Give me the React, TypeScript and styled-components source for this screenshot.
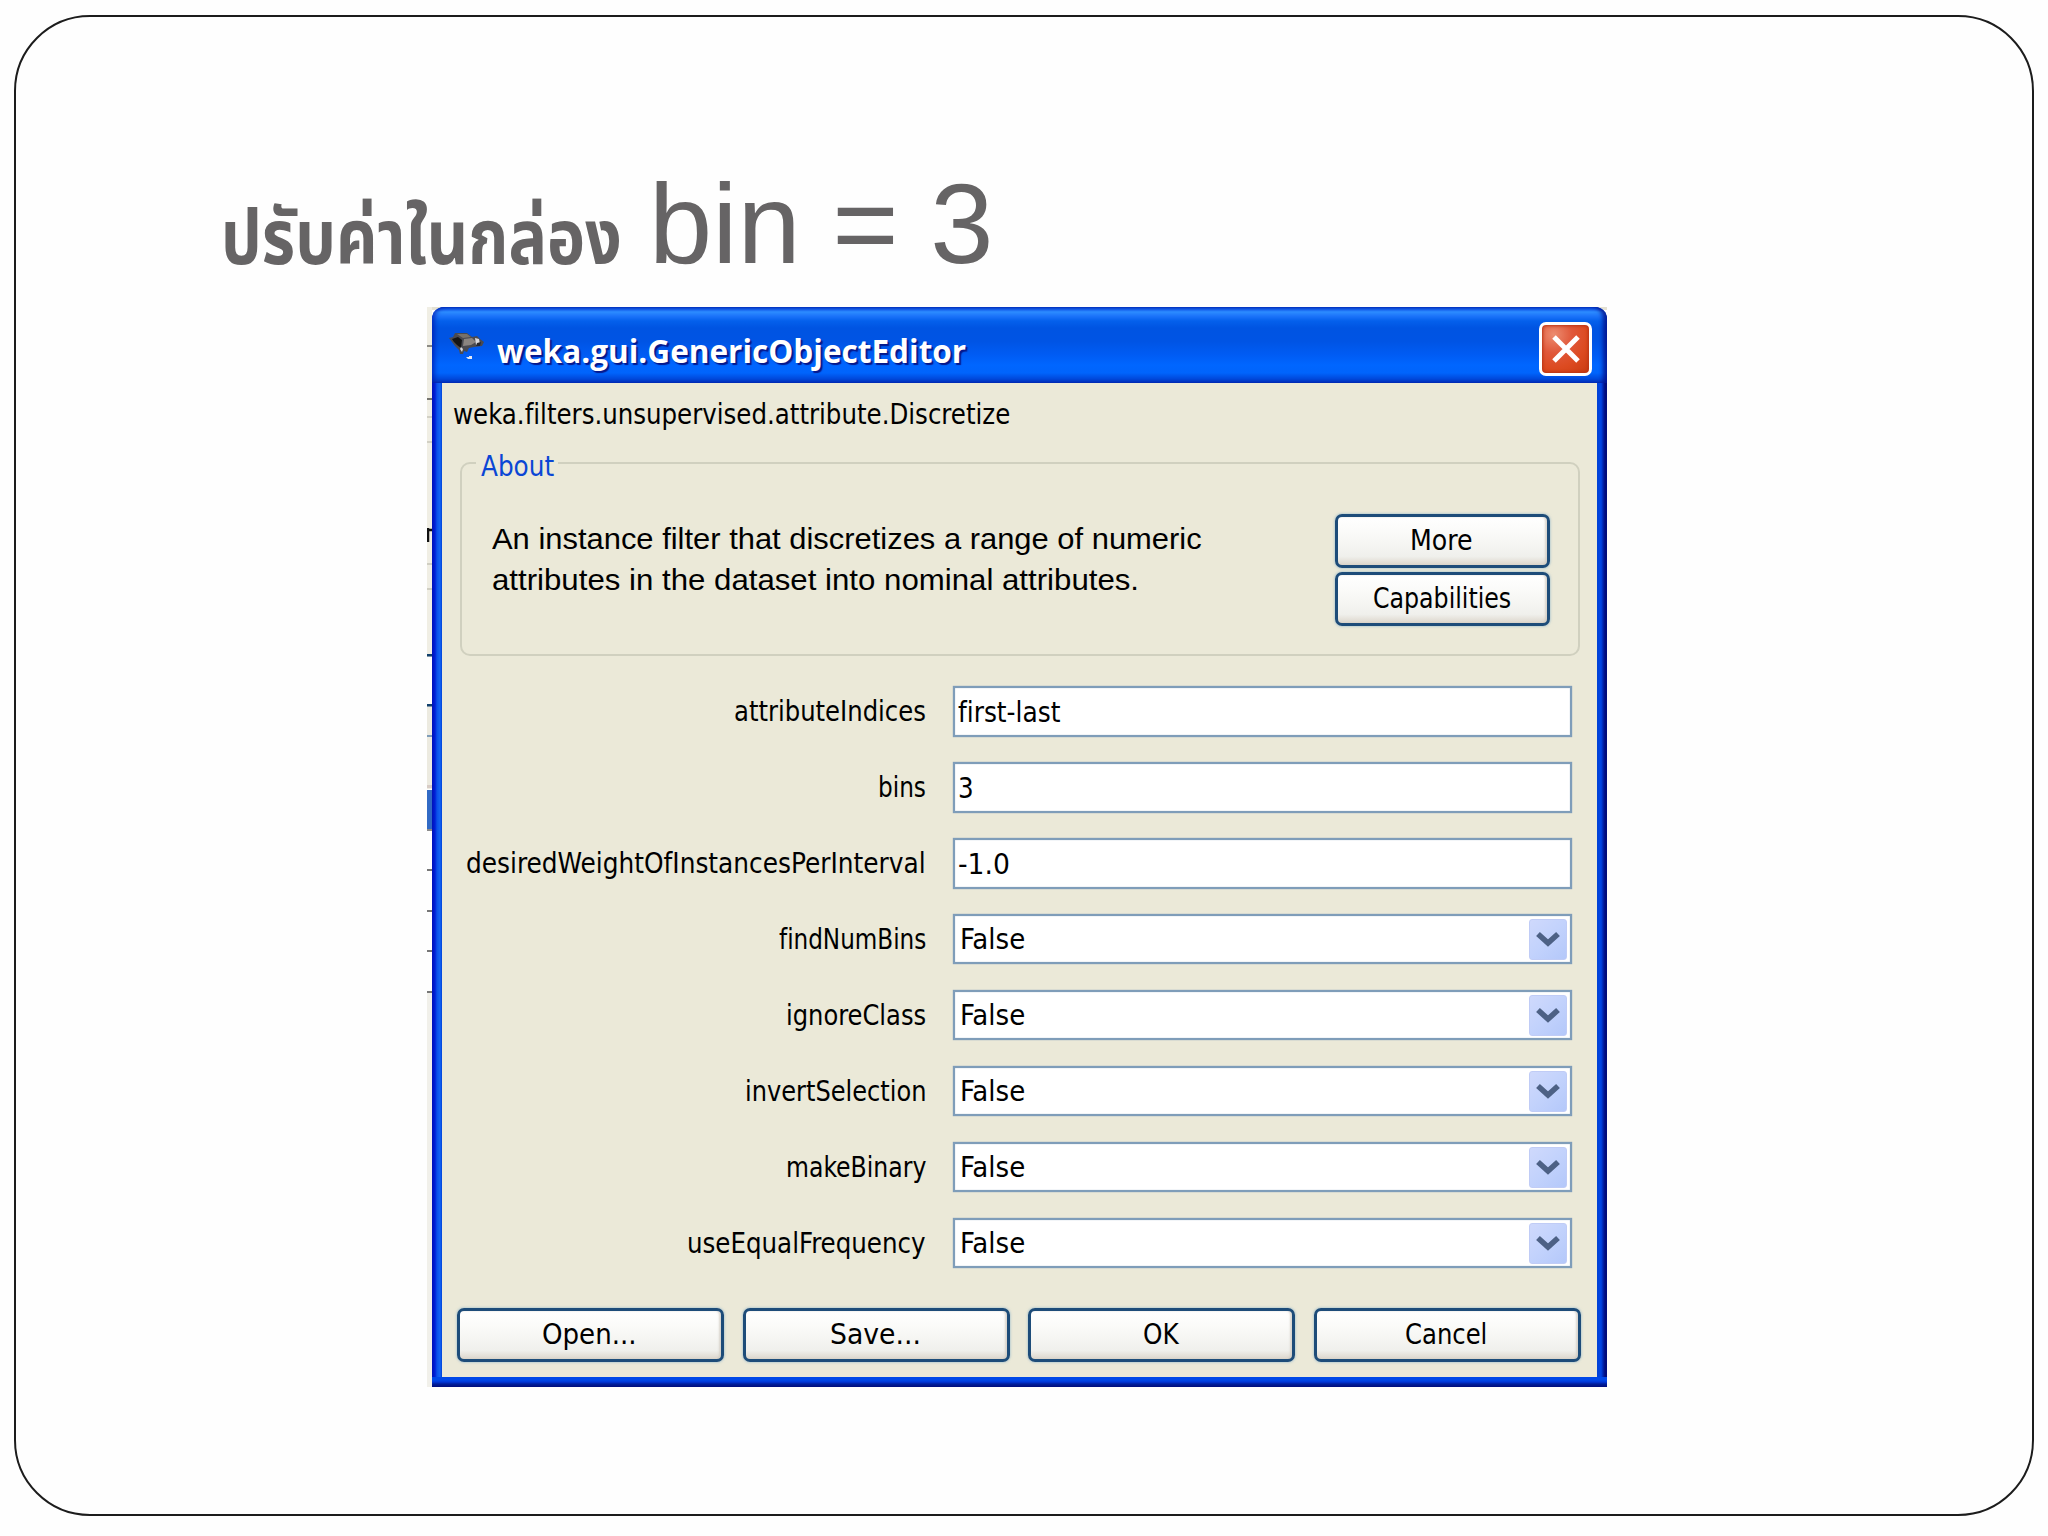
import React, { useLayoutEffect, useRef, useState } from "react";
import styled, { createGlobalStyle } from "styled-components";

const Global = createGlobalStyle`
  * { box-sizing: border-box; }
  html, body { margin: 0; padding: 0; background: #fefefe; overflow: hidden; }
`;

const ui = `"DejaVu Sans Condensed", "DejaVu Sans", Verdana, sans-serif`;

const Slide = styled.main`
  width: 2048px;
  height: 1536px;
  padding: 15px 14px 20px;
  background: #fefefe;
`;

const Frame = styled.section`
  width: 2020px;
  height: 1501px;
  border: 2px solid #1c1c1c;
  border-radius: 76px;
  display: flex;
  flex-direction: column;
`;

const Heading = styled.h1`
  margin: 142px 0 0 205px;
  height: 148px;
  display: flex;
  align-items: flex-start;
  color: #666465;
  font-weight: 400;
  line-height: 130px;
`;

const Thai = styled.span`
  width: 428px;
  padding-top: 17px;
  font-family: "Noto Sans Thai", Loma, Waree, Garuda, "Liberation Sans", sans-serif;
  font-weight: 700;
  font-size: 76px;
`;

const Latin = styled.span`
  font-family: "Liberation Sans", Arial, sans-serif;
  font-size: 113px;
`;

const Capture = styled.div`
  display: flex;
  margin-left: 411px;
  width: 1180px;
  height: 1080px;
  background: linear-gradient(#e4e1d3 0 3px, transparent 3px 100%);
`;

const StripSvg = styled.svg`
  flex: none;
  width: 5px;
  height: 1080px;
`;

const Window = styled.div`
  width: 1175px;
  height: 1080px;
  display: flex;
  flex-direction: column;
  border-radius: 12px 12px 0 0;
  padding: 0 10px 10px;
  background:
    linear-gradient(to bottom, #0048e8 0 3px, #0036d8 5px, #001e9c 7px, #000c7c 10px) bottom / 100% 10px no-repeat,
    linear-gradient(to right, #0012b8 0, #0020d8 3px, #0a50e8 5px, #1264f4 8px, #0042d8 10px) left / 10px 100% no-repeat,
    linear-gradient(to right, #0040d4 0, #0046e6 4px, #0026b0 6px, #000c80 8px, #000c7a 10px) right / 10px 100% no-repeat,
    #0050e8;
`;

const TitleBar = styled.header`
  height: 76px;
  margin: 0 -10px;
  padding: 15px 15px 0 17px;
  display: flex;
  align-items: flex-start;
  border-radius: 12px 12px 0 0;
  background: linear-gradient(
    #0348d8 0, #1c6cf4 3px, #2c8cff 5px, #1c74fa 9px, #0460ec 14px, #0054e2 21px,
    #0054e4 34px, #005cf4 48px, #0066ff 58px, #0064fc 66px, #004ce0 71px, #0038c4 76px
  );
  box-shadow: inset 4px 0 4px -1px rgba(0, 20, 170, 0.65), inset -5px 0 4px -1px rgba(0, 10, 130, 0.8);
`;

const BirdSvg = styled.svg`
  width: 36px;
  height: 30px;
  margin-top: 10px;
`;

const Title = styled.div`
  flex: 1;
  margin-left: 12px;
  font: 700 33px/44px "Open Sans", "Noto Sans", sans-serif;
  color: #fff;
  text-shadow: 2px 2px 1px #06188c;
  padding-top: 7px;
`;

const CloseButton = styled.button`
  width: 53px;
  height: 54px;
  padding: 0;
  border: 3px solid #fff;
  border-radius: 7px;
  display: grid;
  place-items: center;
  background: radial-gradient(circle at 25% 20%, #ec8c70 0, #e0583a 35%, #dc4a20 65%, #c83a10 100%);
  box-shadow: inset 0 0 3px 1px #b83414;
`;

const Client = styled.div`
  flex: 1;
  background: #ebe9d8;
  padding: 0 14px 0 15px;
  display: flex;
  flex-direction: column;
  color: #000;
  font: 400 29px/40px ${ui};
`;

const ClassName = styled.div`
  margin: 11px 0 0 -4px;
  height: 40px;
`;

const About = styled.fieldset`
  margin: 9px 3px 0 3px;
  padding: 0 28px 0 30px;
  height: 213px;
  min-width: 0;
  border: 2px solid #d0d0bf;
  border-radius: 10px;
  display: flex;
  justify-content: space-between;
`;

const Legend = styled.legend`
  height: 40px;
  margin-left: -16px;
  padding: 3px 4px 0 5px;
  color: #0a46d5;
`;

const Description = styled.p`
  margin: 36px 0 0 0;
  font: 400 30px/40.6px "Liberation Sans", Arial, sans-serif;
`;

const ButtonStack = styled.div`
  display: flex;
  flex-direction: column;
  gap: 4px;
  margin-top: 31px;
`;

const XpButton = styled.button<{ $w: number }>`
  width: ${(p) => p.$w}px;
  height: 54px;
  padding: 0 2px 3px 0;
  border: 3px solid #1d4c79;
  border-radius: 7px;
  display: flex;
  align-items: center;
  justify-content: center;
  background: linear-gradient(#fff 0, #fafaf8 35%, #f0f0ec 82%, #dcd6cc 100%);
  box-shadow: 0 0 2px 1px rgba(160, 190, 205, 0.6), inset -2px 0 2px rgba(205, 200, 190, 0.7);
  color: #000;
  font: 400 29px/40px ${ui};
`;

const Form = styled.div`
  margin-top: 30px;
  display: grid;
  grid-template-columns: 469px 619px;
  column-gap: 27px;
  row-gap: 25px;
`;

const Label = styled.label`
  height: 51px;
  line-height: 51px;
  text-align: right;
`;

const Field = styled.div<{ $combo?: boolean }>`
  height: ${(p) => (p.$combo ? 50 : 51)}px;
  border: 2px solid #7f9db9;
  box-shadow: 0 0 1px #7f9db9, inset 0 0 1px #7f9db9;
  background: #fff;
  display: flex;
  align-items: center;
  justify-content: space-between;
  padding: 0 3px 0 ${(p) => (p.$combo ? 5 : 3)}px;
`;

const DropButton = styled.span`
  width: 38px;
  height: 41px;
  margin-top: 0;
  border-radius: 3px;
  border: 1px solid #c0ccf6;
  display: grid;
  place-items: center;
  background: linear-gradient(135deg, #cfd9fc 0%, #c2d2fc 50%, #b4c8fa 100%);
`;

const Footer = styled.footer`
  margin-top: 39px;
  display: flex;
  gap: 18.6px;
`;

const FitBox = styled.span`
  display: inline-block;
  white-space: nowrap;
  text-align: left;
  font-variant-ligatures: none;
`;

const FitInner = styled.span`
  display: inline-block;
  transform-origin: 0 50%;
`;

/* Stretches a run of text horizontally so that it fills a given width. */
function Fit({ w, children }: { w: number; children: React.ReactNode }) {
  const ref = useRef<HTMLSpanElement>(null);
  const [scale, setScale] = useState(1);
  useLayoutEffect(() => {
    if (ref.current) setScale(w / ref.current.offsetWidth);
  }, [w]);
  return (
    <FitBox style={{ width: w }}>
      <FitInner ref={ref} style={{ transform: `scaleX(${scale})` }}>
        {children}
      </FitInner>
    </FitBox>
  );
}

const marks: [number, number, string][] = [
  [38, 2, "#8c8a84"], [91, 2, "#77756f"], [109, 2, "#d2d0c4"], [134, 2, "#d2d0c4"],
  [256, 2, "#d0cec2"], [281, 2, "#d0cec2"], [347, 2.5, "#12406c"], [397, 2.5, "#12406c"],
  [428, 2, "#7f9db9"], [478, 3, "#d8ccc6"], [483, 39, "#316ac5"], [522, 2, "#8b8b8b"],
  [562, 2, "#777"], [603, 2, "#777"], [643, 2, "#777"], [684, 2, "#777"],
];

function Strip() {
  return (
    <StripSvg viewBox="0 0 5 1080">
      <rect width="5" height="350" fill="#f0eee4" />
      <rect y="398" width="5" height="84" fill="#eceae0" />
      <rect y="686" width="5" height="394" fill="#f1f0ea" />
      {marks.map(([y, h, c]) => (
        <rect key={y} y={y} width="5" height={h} fill={c} />
      ))}
      <path d="M1 221v14M1 223h4" stroke="#111" strokeWidth="2.5" fill="none" />
    </StripSvg>
  );
}

function Bird() {
  return (
    <BirdSvg viewBox="0 0 36 30">
      <path d="M0 6l4-1 2-4h12l5 4 5-1 3 3 4 3-2 4-8 1-5 1-2 4-3-1-1 3h-3l-1-4-4-4-3-4z" fill="#4a4a50" />
      <path d="M3 7l6-2 4 3-1 8-4-3-3-3z" fill="#141414" />
      <path d="M8 2h10l4 3-8 1z" fill="#77716a" />
      <path d="M15 7l8-1 4 4-5 3-8 1z" fill="#8a8480" />
      <path d="M26 6l4 1 1 5-4 1zM12 15l2 2-1 3-2-3z" fill="#d8d8dc" />
      <path d="M28 11l4-1-1 4-4 0z" fill="#2a2a30" />
      <path d="M17 25h3v-1h3v3h-4z" fill="#e4e8f4" />
    </BirdSvg>
  );
}

const fields: { label: string; lw: number; value: string; vw: number; combo?: boolean }[] = [
  { label: "attributeIndices", lw: 192, value: "first-last", vw: 102 },
  { label: "bins", lw: 48, value: "3", vw: 16 },
  { label: "desiredWeightOfInstancesPerInterval", lw: 460, value: "-1.0", vw: 52 },
  { label: "findNumBins", lw: 147, value: "False", vw: 65, combo: true },
  { label: "ignoreClass", lw: 140, value: "False", vw: 65, combo: true },
  { label: "invertSelection", lw: 181, value: "False", vw: 65, combo: true },
  { label: "makeBinary", lw: 140, value: "False", vw: 65, combo: true },
  { label: "useEqualFrequency", lw: 239, value: "False", vw: 65, combo: true },
];

const actions: [string, number][] = [["Open...", 95], ["Save...", 91], ["OK", 36], ["Cancel", 82]];

export default function App() {
  return (
    <Slide>
      <Global />
      <Frame>
        <Heading>
          <Thai><Fit w={401}>ปรับค่าในกล่อง</Fit></Thai>
          <Latin><Fit w={344}>bin = 3</Fit></Latin>
        </Heading>
        <Capture>
          <Strip />
          <Window>
            <TitleBar>
              <Bird />
              <Title><Fit w={469}>weka.gui.GenericObjectEditor</Fit></Title>
              <CloseButton>
                <svg width="30" height="30" viewBox="0 0 30 30">
                  <path d="M3 3L27 27M27 3L3 27" stroke="#fff" strokeWidth="5" />
                </svg>
              </CloseButton>
            </TitleBar>
            <Client>
              <ClassName><Fit w={557}>weka.filters.unsupervised.attribute.Discretize</Fit></ClassName>
              <About>
                <Legend><Fit w={73}>About</Fit></Legend>
                <Description>
                  <Fit w={710}>An instance filter that discretizes a range of numeric</Fit>
                  <br />
                  <Fit w={647}>attributes in the dataset into nominal attributes.</Fit>
                </Description>
                <ButtonStack>
                  <XpButton $w={215}><Fit w={63}>More</Fit></XpButton>
                  <XpButton $w={215}><Fit w={138}>Capabilities</Fit></XpButton>
                </ButtonStack>
              </About>
              <Form>
                {fields.map((f) => (
                  <React.Fragment key={f.label}>
                    <Label><Fit w={f.lw}>{f.label}</Fit></Label>
                    <Field $combo={f.combo}>
                      <Fit w={f.vw}>{f.value}</Fit>
                      {f.combo && (
                        <DropButton>
                          <svg width="24" height="18" viewBox="0 0 24 18">
                            <path d="M2 4L12 13L22 4" fill="none" stroke="#4d6185" strokeWidth="5.6" />
                          </svg>
                        </DropButton>
                      )}
                    </Field>
                  </React.Fragment>
                ))}
              </Form>
              <Footer>
                {actions.map(([t, w]) => (
                  <XpButton key={t} $w={267}><Fit w={w}>{t}</Fit></XpButton>
                ))}
              </Footer>
            </Client>
          </Window>
        </Capture>
      </Frame>
    </Slide>
  );
}
